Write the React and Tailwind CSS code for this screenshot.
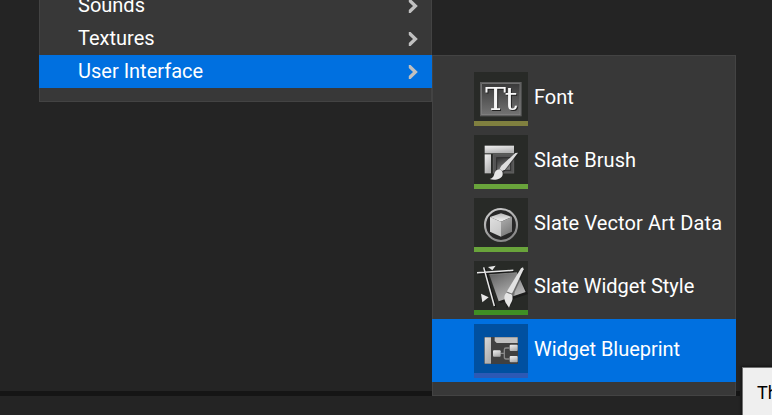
import React from "react";

function Chevron() {
  return (
    <svg width="10" height="16" viewBox="0 0 10 16" className="mr-[14px] shrink-0">
      <path d="M0.8 1H2.6L9.8 8L2.6 15H0.8V12L5 8L0.8 4Z" fill="#c0c0c0" />
    </svg>
  );
}

function Metal({ id, from = "#f2f2f2", to = "#b4b4b4" }) {
  return (
    <linearGradient id={id} x1="0" y1="0" x2="0.4" y2="1">
      <stop offset="0" stopColor={from} />
      <stop offset="1" stopColor={to} />
    </linearGradient>
  );
}

function FontIcon() {
  return (
    <svg width="54" height="49" viewBox="0 0 162 147">
      <defs>
        <linearGradient id="fontBg" x1="0" y1="0" x2="0" y2="1">
          <stop offset="0" stopColor="#383838" />
          <stop offset="1" stopColor="#747474" />
        </linearGradient>
      </defs>
      <rect x="20" y="32" width="121" height="99" fill="url(#fontBg)" stroke="#5e5e5e" strokeWidth="4" />
      <rect x="23" y="35" width="115" height="93" fill="none" stroke="#858585" strokeWidth="2" />
      <text
        x="34"
        y="115"
        fontSize="93"
        fontFamily="'DejaVu Serif', serif"
        letterSpacing="-4"
        fill="#f8f8f8"
        className="[filter:drop-shadow(3px_3px_1px_#222222)]"
      >
        Tt
      </text>
    </svg>
  );
}

function BrushIcon() {
  return (
    <svg width="54" height="49" viewBox="12 15 162 147">
      <defs>
        <Metal id="brushBar" />
        <Metal id="brushInner" from="#303030" to="#787878" />
      </defs>
      <rect x="44" y="47" width="88" height="23" fill="url(#brushBar)" />
      <rect x="44" y="73" width="19" height="57" fill="url(#brushBar)" />
      <rect x="70" y="74" width="61" height="55" fill="#545454" stroke="#626262" strokeWidth="3" />
      <rect x="80" y="83" width="42" height="38" fill="url(#brushInner)" stroke="#2e2e2e" strokeWidth="3" />
      <path d="M147 71L102 126C95 142 80 151 64 152L96 112Z" fill="#1b1b1b" opacity="0.5" />
      <path d="M144 68L136 69L94 107L89 116L97 123L106 118Z" fill="#dddddd" />
      <path d="M90 118C78 118 74 127 72 135C70 142 66 145 59 147C74 152 95 148 98 134C99 128 96 120 90 118Z" fill="#e6e6e6" />
    </svg>
  );
}

function CubeIcon() {
  return (
    <svg width="54" height="49" viewBox="12 15 162 147">
      <defs>
        <Metal id="cubeRing" from="#d0d0d0" to="#8a8a8a" />
        <linearGradient id="cubeTop" x1="0" y1="0" x2="0" y2="1">
          <stop offset="0" stopColor="#b8b8b8" />
          <stop offset="1" stopColor="#f4f4f4" />
        </linearGradient>
        <Metal id="cubeLeft" from="#e0e0e0" to="#c8c8c8" />
        <Metal id="cubeRight" from="#b0b0b0" to="#7c7c7c" />
      </defs>
      <circle cx="93" cy="96" r="48" fill="#272727" stroke="url(#cubeRing)" strokeWidth="6.5" />
      <path d="M93 61L126 72L93 86L60 72Z" fill="url(#cubeTop)" />
      <path d="M60 72L93 86V131L60 116Z" fill="url(#cubeLeft)" />
      <path d="M126 72L93 86V131L126 116Z" fill="url(#cubeRight)" />
    </svg>
  );
}

function StyleIcon() {
  return (
    <svg width="54" height="49" viewBox="12 15 162 147">
      <defs>
        <linearGradient id="styleSheet" x1="0" y1="0" x2="0.6" y2="1">
          <stop offset="0" stopColor="#5e5e5e" />
          <stop offset="1" stopColor="#bebebe" />
        </linearGradient>
      </defs>
      <path d="M60 60L143 54L174 114L91 142Z" fill="#171717" opacity="0.7" />
      <path d="M58 56L141 50L167 108L86 136Z" fill="url(#styleSheet)" />
      <path d="M58 56L141 50" stroke="#999999" strokeWidth="2" />
      <path d="M25 54L132 46M46 36L77 153" stroke="#151515" strokeWidth="4" />
      <path d="M21 50L130 43M41 34L73 150" stroke="#e6e6e6" strokeWidth="4.5" />
      <path d="M54 33L77 29L67 43ZM33 113L56 124L37 139Z" fill="#e8e8e8" />
      <path d="M160 38L164 43L134 108C132 134 125 153 108 157L111 110Z" fill="#161616" opacity="0.4" />
      <path d="M159 34L153 37L115 99L110 108L125 114L130 105L161 40Z" fill="#e2e2e2" />
      <path d="M110 110L125 115C131 127 126 136 121 145L117 155C112 146 103 137 103 125C103 118 106 112 110 110Z" fill="#e5e5e5" />
      <path d="M110 108L126 114" stroke="#777777" strokeWidth="3" />
    </svg>
  );
}

function WidgetIcon() {
  return (
    <svg width="54" height="49" viewBox="12 24 162 147">
      <defs>
        <Metal id="widgetBar" from="#d8d8d8" to="#b0b0b0" />
        <Metal id="widgetNode" from="#f2f2f2" to="#b0b0b0" />
      </defs>
      <rect x="43" y="63" width="101" height="81" fill="#404040" />
      <rect x="44" y="64" width="19" height="79" fill="url(#widgetBar)" />
      <path d="M74 64H143V81H80L74 75Z" fill="#c1c1c1" />
      <path d="M91 112H102M118 96H108Q103 96 103 101V123Q103 129 108 129H118" fill="none" stroke="#888888" strokeWidth="4" />
      <rect x="69" y="103" width="23" height="19" rx="3" fill="url(#widgetNode)" />
      <rect x="119" y="86" width="24" height="19" rx="3" fill="url(#widgetNode)" />
      <rect x="119" y="120" width="24" height="19" rx="3" fill="url(#widgetNode)" />
    </svg>
  );
}

const categories = [
  { label: "Sounds" },
  { label: "Textures" },
  { label: "User Interface", active: true },
];

const assets = [
  { label: "Font", Icon: FontIcon, bar: "bg-[#80803f]", tracking: "" },
  { label: "Slate Brush", Icon: BrushIcon, bar: "bg-[#69a43b]", tracking: "tracking-[0.08px]" },
  { label: "Slate Vector Art Data", Icon: CubeIcon, bar: "bg-[#69a43b]", tracking: "tracking-[0.11px]" },
  { label: "Slate Widget Style", Icon: StyleIcon, bar: "bg-[#3f8f23]", tracking: "" },
  { label: "Widget Blueprint", Icon: WidgetIcon, bar: "bg-[#2c59b5]", tracking: "tracking-[-0.04px]", active: true },
];

export default function App() {
  return (
    <div className="relative h-[415px] w-[772px] overflow-hidden bg-[#242424] font-['Roboto',sans-serif] text-[20px] leading-[24px] text-white">
      <div className="flex h-full flex-col">
        <div className="h-[391px]" />
        <div className="mr-[32px] h-[5px] bg-[#151515]" />
      </div>

      <div className="absolute -top-[11px] left-[39px] flex h-[113px] w-[393px] flex-col bg-[#383838] shadow-[inset_0_0_0_1px_#434343]">
        {categories.map(({ label, active }) => (
          <div
            key={label}
            className={`flex h-[33px] items-center justify-between pl-[39px] ${active ? "bg-[#0070e0]" : ""}`}
          >
            <span className="pb-[2px]">{label}</span>
            <Chevron />
          </div>
        ))}
      </div>

      <div className="absolute left-[432px] top-[55px] flex h-[341px] w-[304px] flex-col bg-[#383838] pt-[12px] shadow-[inset_0_0_0_1px_#434343]">
        {assets.map(({ label, Icon, bar, tracking, active }) => (
          <div
            key={label}
            className={`flex h-[63px] items-start gap-[6px] pl-[42px] pt-[5px] ${active ? "bg-[#0070e0]" : ""}`}
          >
            <div className={`flex h-[54px] w-[54px] shrink-0 flex-col ${active ? "bg-[#0050a0]" : "bg-[#282a27]"}`}>
              <Icon />
              <div className={`h-[5px] ${bar}`} />
            </div>
            <span className={`mt-[13px] whitespace-nowrap ${tracking}`}>{label}</span>
          </div>
        ))}
      </div>

      <div className="absolute left-[742px] top-[367px] h-[60px] w-[120px] border border-[#707070] bg-[#efefef] pl-[14px] pt-[13px] text-[18px] text-black shadow-[0_0_2px_1px_#151515]">
        Th
      </div>
    </div>
  );
}
